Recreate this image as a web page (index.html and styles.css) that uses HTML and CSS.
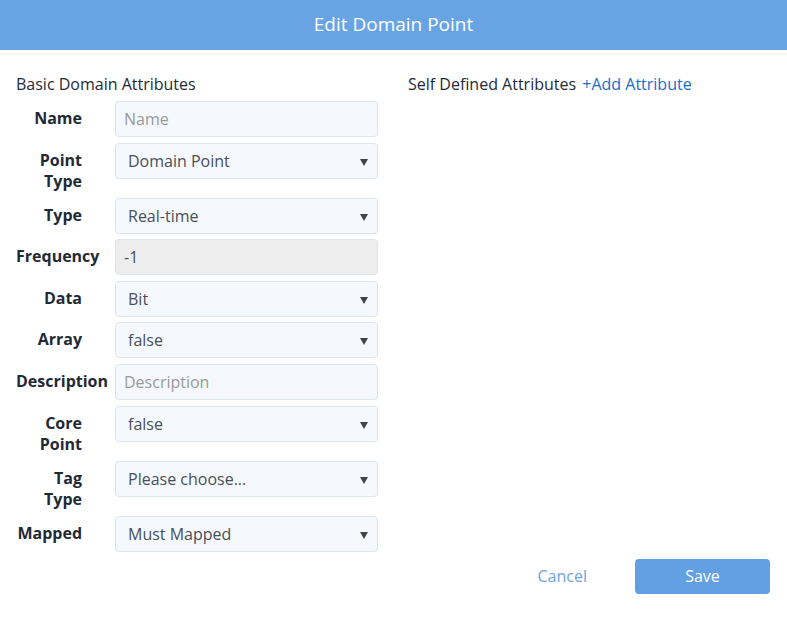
FILE: index.html
```html
<!DOCTYPE html>
<html>
<head>
<meta charset="utf-8">
<link rel="stylesheet" href="styles.css">
</head>
<body>
<div class="dialog">
  <header class="dialog-header">Edit Domain Point</header>
  <div class="dialog-body">
    <section class="col-left">
      <h3 class="section-title">Basic Domain Attributes</h3>
      <div class="form">
        <div class="row"><label class="lbl">Name</label><div class="field placeholder">Name</div></div>
        <div class="row"><label class="lbl">Point Type</label><div class="field select">Domain Point<span class="caret"></span></div></div>
        <div class="row"><label class="lbl">Type</label><div class="field select">Real-time<span class="caret"></span></div></div>
        <div class="row"><label class="lbl">Frequency</label><div class="field disabled">-1</div></div>
        <div class="row"><label class="lbl">Data</label><div class="field select">Bit<span class="caret"></span></div></div>
        <div class="row"><label class="lbl">Array</label><div class="field select">false<span class="caret"></span></div></div>
        <div class="row"><label class="lbl">Description</label><div class="field placeholder">Description</div></div>
        <div class="row"><label class="lbl">Core Point</label><div class="field select">false<span class="caret"></span></div></div>
        <div class="row"><label class="lbl">Tag Type</label><div class="field select">Please choose...<span class="caret"></span></div></div>
        <div class="row"><label class="lbl">Mapped</label><div class="field select">Must Mapped<span class="caret"></span></div></div>
      </div>
    </section>
    <section class="col-right">
      <h3 class="section-title">Self Defined Attributes <a class="add-link">+Add Attribute</a></h3>
    </section>
  </div>
  <footer class="dialog-footer">
    <button class="btn-cancel">Cancel</button>
    <button class="btn-save">Save</button>
  </footer>
</div>
</body>
</html>
```

FILE: styles.css
```css
* { box-sizing: border-box; }
html, body { margin: 0; padding: 0; background: #fff; }
body {
  font-family: "Open Sans", "Noto Sans", sans-serif;
  color: #222c38;
  width: 787px;
  height: 622px;
  overflow: hidden;
}
.dialog-header {
  height: 50px;
  background: #68a4e4;
  color: #fff;
  font-size: 19px;
  display: flex;
  align-items: center;
  justify-content: center;
  padding-bottom: 2px;
}
.dialog-body {
  display: flex;
  padding: 0 16px;
}
.col-left { width: 362px; }
.col-right { margin-left: 30px; }
.section-title {
  margin: 23px 0 6px 0;
  font-size: 16px;
  font-weight: normal;
  line-height: 22px;
  color: #1f2a36;
}
.add-link { color: #1a6ccc; margin-left: 2px; }
.form { display: flex; flex-direction: column; gap: 5.6px; }
.row {
  display: grid;
  grid-template-columns: 66px 263px;
  column-gap: 33px;
  align-items: start;
}
.lbl {
  text-align: right;
  font-weight: bold;
  font-size: 16px;
  line-height: 21.2px;
  padding-top: 7px;
  color: #1f2a36;
}
.field {
  position: relative;
  height: 36px;
  border: 1px solid #dce4ee;
  border-radius: 4px;
  background: #f5f9fe;
  font-size: 16px;
  line-height: 34px;
  color: #4a4f57;
  padding-left: 12px;
}
.field.placeholder { color: #999; padding-left: 8px; }
.field.disabled { background: #ededed; padding-left: 8px; }
.caret {
  position: absolute;
  right: 9px;
  top: 15px;
  width: 0;
  height: 0;
  border-left: 4px solid transparent;
  border-right: 4px solid transparent;
  border-top: 7px solid #444;
}
.dialog-footer {
  display: flex;
  justify-content: flex-end;
  align-items: center;
  padding: 0 17px 0 0;
  margin-top: 7px;
  gap: 48px;
}
.btn-cancel {
  border: none;
  background: none;
  font-family: inherit;
  font-size: 16px;
  color: #6fa3e2;
  padding: 0;
}
.btn-save {
  width: 135px;
  height: 35px;
  border: none;
  border-radius: 4px;
  background: #62a0e3;
  color: #fff;
  font-family: inherit;
  font-size: 16px;
}
```
